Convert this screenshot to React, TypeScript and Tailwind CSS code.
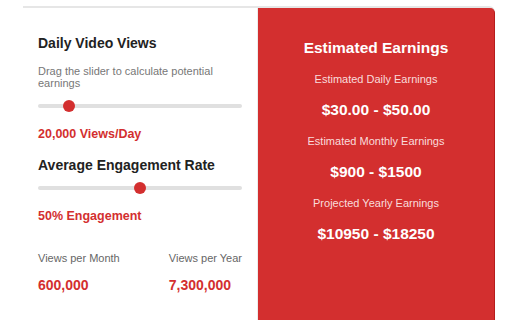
import React from 'react'

const font = { fontFamily: '"Liberation Sans", Arial, sans-serif' }

interface SliderProps {
  value: number
  min: number
  max: number
}

function Slider({ value, min, max }: SliderProps) {
  const pct = ((value - min) / (max - min)) * 100
  return (
    <div className="relative h-[12px] w-full flex items-center">
      <div className="h-[4px] w-full rounded-full bg-[#e0e0e0]" />
      <div
        className="absolute top-0 h-[12px] w-[12px] -ml-[6px] rounded-full bg-[#d32f2f]"
        style={{ left: `${pct}%` }}
      />
    </div>
  )
}

const earnings = [
  { label: 'Estimated Daily Earnings', value: '$30.00 - $50.00' },
  { label: 'Estimated Monthly Earnings', value: '$900 - $1500' },
  { label: 'Projected Yearly Earnings', value: '$10950 - $18250' },
]

export default function App() {
  const dailyViews = 20000
  const engagement = 50

  return (
    <div className="w-[512px] h-[320px] overflow-hidden bg-white pl-[23px] pt-[6px]" style={font}>
      <div className="w-[472px] h-[314px] flex border-t-2 border-[#e6e6e6] rounded-tr-[6px]">
        {/* Inputs */}
        <div className="w-[235px] shrink-0 border-r border-[#ececec] px-[15px] pt-[27px] flex flex-col">
          <h2 className="text-[14px] leading-[17px] font-bold text-[#222]">Daily Video Views</h2>
          <p className="mt-[13px] text-[11px] leading-[12px] text-[#777]">
            Drag the slider to calculate potential earnings
          </p>
          <div className="mt-[11px]">
            <Slider value={dailyViews} min={0} max={130000} />
          </div>
          <p className="mt-[15px] text-[12.5px] leading-[15px] font-bold text-[#d32f2f]">20,000 Views/Day</p>

          <h2 className="mt-[15px] text-[14px] leading-[17px] font-bold text-[#222]">Average Engagement Rate</h2>
          <div className="mt-[8px]">
            <Slider value={engagement} min={0} max={100} />
          </div>
          <p className="mt-[15px] text-[12.5px] leading-[15px] font-bold text-[#d32f2f]">50% Engagement</p>

          <div className="mt-[28px] flex justify-between">
            <div className="flex flex-col gap-[13px]">
              <span className="text-[11px] leading-[12px] text-[#666]">Views per Month</span>
              <span className="text-[14px] leading-[17px] font-bold text-[#d32f2f]">600,000</span>
            </div>
            <div className="flex flex-col gap-[13px]">
              <span className="text-[11px] leading-[12px] text-[#666]">Views per Year</span>
              <span className="text-[14px] leading-[17px] font-bold text-[#d32f2f]">7,300,000</span>
            </div>
          </div>
        </div>

        {/* Results */}
        <div className="flex-1 bg-[#d32f2f] border-r border-[#b71c1c] rounded-tr-[5px] pt-[31px] flex flex-col items-center gap-[16px] text-center">
          <h2 className="text-[15.5px] leading-[18px] font-bold text-white">Estimated Earnings</h2>
          {earnings.map((e) => (
            <React.Fragment key={e.label}>
              <span className="text-[11px] leading-[12px] text-[#f9dcdc]">{e.label}</span>
              <span className="text-[15.5px] leading-[18px] font-bold text-white">{e.value}</span>
            </React.Fragment>
          ))}
        </div>
      </div>
    </div>
  )
}
